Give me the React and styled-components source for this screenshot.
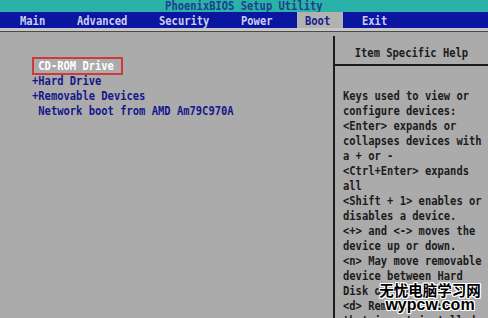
import styled, { createGlobalStyle } from "styled-components";

const GlobalStyle = createGlobalStyle`
  html, body {
    margin: 0;
    padding: 0;
    background: #ababab;
  }
`;

const TABS = [
  { label: "Main", w: 57 },
  { label: "Advanced", w: 82 },
  { label: "Security", w: 82 },
  { label: "Power", w: 64 },
  { label: "Boot", w: 46, active: true },
  { label: "Exit", w: 80 },
];

const DEVICES = [
  { text: " CD-ROM Drive", selected: true },
  { text: "+Hard Drive" },
  { text: "+Removable Devices" },
  { text: " Network boot from AMD Am79C970A" },
];

const HELP = [
  "Keys used to view or",
  "configure devices:",
  "<Enter> expands or",
  "collapses devices with",
  "a + or -",
  "<Ctrl+Enter> expands",
  "all",
  "<Shift + 1> enables or",
  "disables a device.",
  "<+> and <-> moves the",
  "device up or down.",
  "<n> May move removable",
  "device between Hard",
  "Disk or Removable Disk",
  "<d> Remove a device",
  "that is not installed.",
];

const App = () => {
  return (
    <>
      <GlobalStyle />
      <Screen>
        <TitleBar>
          <Glyphs $origin="center">PhoenixBIOS Setup Utility</Glyphs>
        </TitleBar>
        <MenuBar>
          {TABS.map((t) => (
            <Tab key={t.label} $w={t.w} $active={t.active}>
              <Glyphs>{t.label}</Glyphs>
            </Tab>
          ))}
        </MenuBar>
        <Rule />
        <Body>
          <DevicePane>
            {DEVICES.map((d) => (
              <Device key={d.text} $selected={d.selected}>
                <Glyphs>{d.text}</Glyphs>
              </Device>
            ))}
          </DevicePane>
          <HelpPane>
            <HelpHeader>
              <Glyphs $origin="center">Item Specific Help</Glyphs>
            </HelpHeader>
            <HelpText>
              {HELP.map((line) => (
                <HelpLine key={line}>
                  <Glyphs>{line}</Glyphs>
                </HelpLine>
              ))}
            </HelpText>
          </HelpPane>
        </Body>
        <Watermark>
          <WatermarkCn>无忧电脑学习网</WatermarkCn>
          <WatermarkUrl>wypcw.com</WatermarkUrl>
        </Watermark>
      </Screen>
    </>
  );
};

// bios font is tall and narrow, squeeze the mono font to a 6.3px cell
const Glyphs = styled.span`
  display: inline-block;
  white-space: pre;
  transform: scaleX(0.805);
  transform-origin: ${(p) => p.$origin || "left"};
`;

const Screen = styled.div`
  position: relative;
  width: 488px;
  height: 318px;
  overflow: hidden;
  background: #ababab;
  font-family: "DejaVu Sans Mono", "Liberation Mono", monospace;
  font-size: 13px;
  font-weight: bold;
  display: flex;
  flex-direction: column;
`;

const TitleBar = styled.div`
  flex-shrink: 0;
  height: 12px;
  line-height: 12px;
  background: #2ab2a8;
  color: #1d3f8e;
  text-align: center;
  overflow: hidden;
`;

const MenuBar = styled.div`
  flex-shrink: 0;
  display: flex;
  height: 16px;
  padding-left: 12px;
  background: #0c14a2;
`;

const Tab = styled.div`
  flex-shrink: 0;
  width: ${(p) => p.$w}px;
  margin-right: ${(p) => (p.$active ? 11 : 0)}px;
  padding: 2px 0 0 8px;
  box-sizing: border-box;
  line-height: 14px;
  color: ${(p) => (p.$active ? "#16208e" : "#c9d1f0")};
  background: ${(p) => (p.$active ? "#b2b2b2" : "transparent")};
`;

const Rule = styled.div`
  flex-shrink: 0;
  height: 3px;
  background: #c6c6c6;
  border-bottom: 1px solid #4a4a4a;
`;

const Body = styled.div`
  flex: 1;
  min-height: 0;
  display: flex;
  padding-top: 4px;
`;

const DevicePane = styled.div`
  flex-shrink: 0;
  width: 333px;
  padding: 22px 0 0 32px;
  box-sizing: border-box;
  line-height: 15px;
`;

const Device = styled.div`
  position: relative;
  height: 15px;
  color: ${(p) => (p.$selected ? "#ffffff" : "#14188a")};

  &::before {
    content: "";
    display: ${(p) => (p.$selected ? "block" : "none")};
    position: absolute;
    left: 0;
    top: -1px;
    width: 91px;
    height: 18px;
    box-sizing: border-box;
    border: 2px solid #cf3b3b;
  }
`;

const HelpPane = styled.div`
  flex: 1;
  min-width: 0;
  border-left: 2px solid #1c1c1c;
  color: #1b1b1b;
`;

const HelpHeader = styled.div`
  height: 30px;
  padding-top: 9px;
  box-sizing: border-box;
  line-height: 15px;
  text-align: center;
  border-bottom: 2px solid #1c1c1c;
`;

const HelpText = styled.div`
  padding: 22px 0 0 8px;
  line-height: 15px;
`;

const HelpLine = styled.div`
  height: 15px;
`;

const Watermark = styled.div`
  position: absolute;
  left: 376px;
  top: 281px;
  display: flex;
  flex-direction: column;
  align-items: center;
  width: 108px;
  color: #000;
  font-weight: bold;
  text-shadow: 1px 0 #fff, -1px 0 #fff, 0 1px #fff, 0 -1px #fff, 1px 1px #fff,
    -1px -1px #fff, 1px -1px #fff, -1px 1px #fff;
`;

const WatermarkCn = styled.div`
  font-family: "Noto Sans CJK SC", sans-serif;
  font-size: 14.5px;
  line-height: 17px;
`;

const WatermarkUrl = styled.div`
  font-family: "Liberation Sans", Arial, sans-serif;
  font-size: 16px;
  line-height: 16px;
  margin-top: -1px;
`;

export default App;
